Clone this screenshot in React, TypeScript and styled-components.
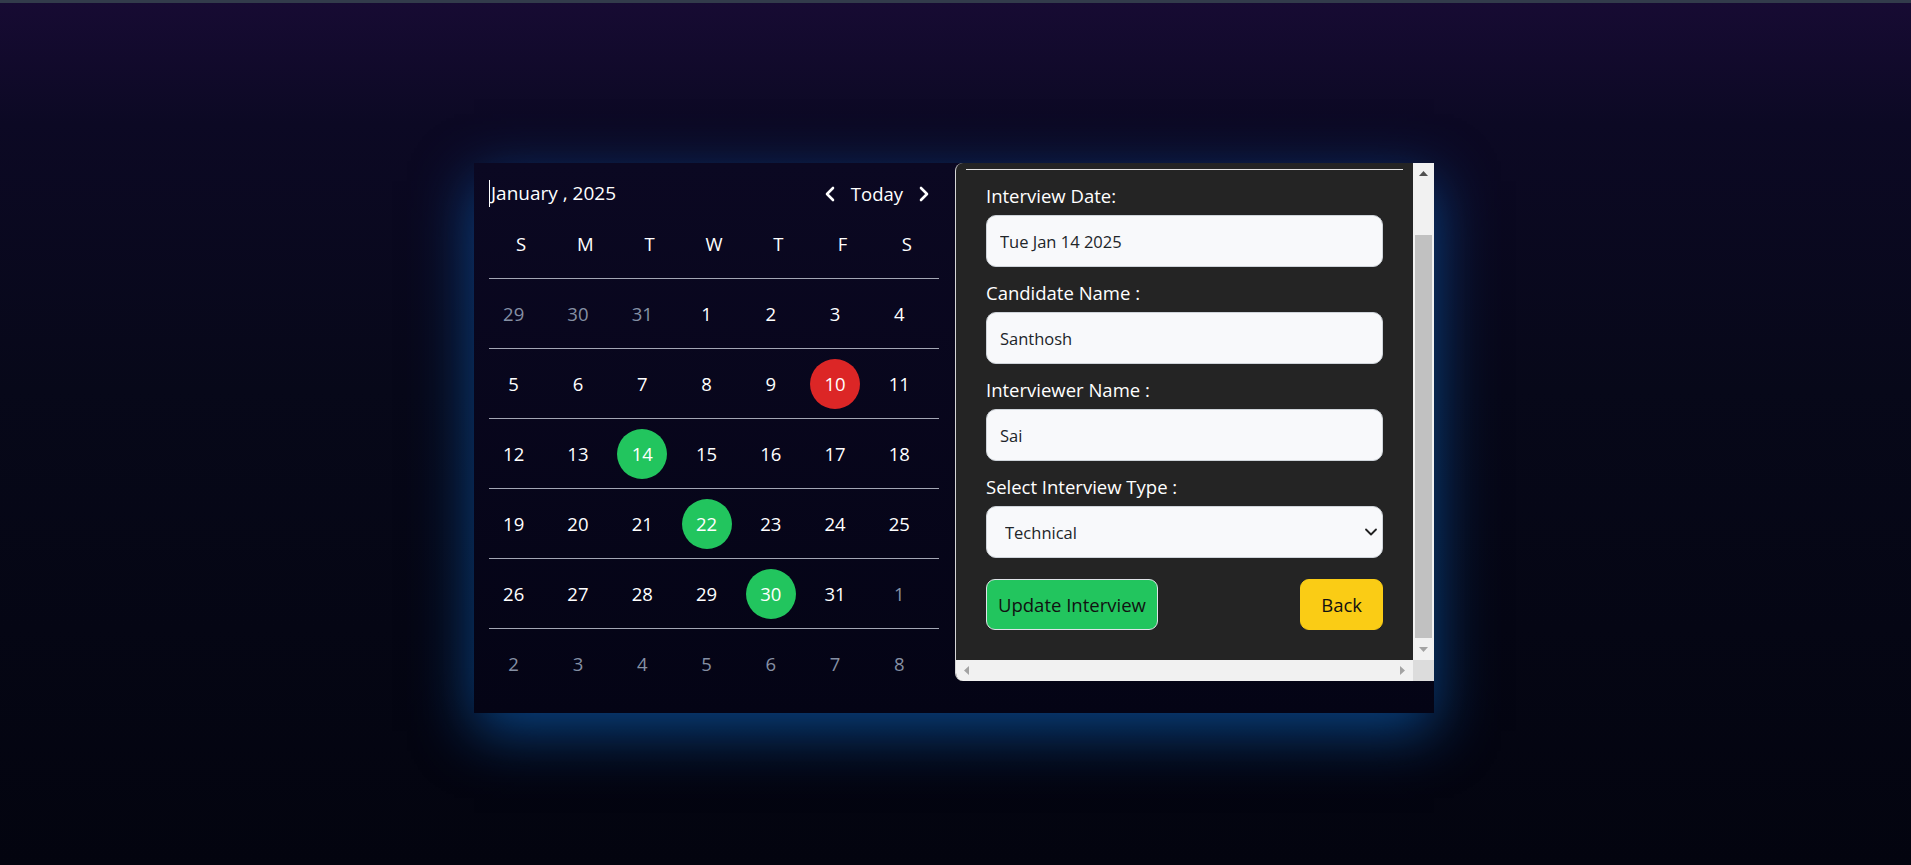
import React from "react";
import styled, { createGlobalStyle } from "styled-components";
import { ChevronLeft, ChevronRight, ChevronDown } from "lucide-react";

const GlobalStyle = createGlobalStyle`
  html, body { margin: 0; padding: 0; }
  body {
    font-family: "Open Sans", "Noto Sans", sans-serif;
    background: #03040f;
  }
  *, *::before, *::after { box-sizing: border-box; }
`;

const Page = styled.div`
  height: 865px;
  overflow: hidden;
  border-top: 3px solid #323b4b;
  background: linear-gradient(180deg, #170b33 0%, #0c0924 14%, #070819 45%, #03040f 100%);
  display: flex;
  justify-content: center;
  align-items: flex-start;
  padding: 160px 3px 0 0;
`;

const Card = styled.div`
  width: 960px;
  height: 550px;
  flex: none;
  display: flex;
  align-items: flex-start;
  background: linear-gradient(180deg, #0b0822 0%, #040415 100%);
  box-shadow: 0 18px 55px rgba(12, 108, 205, 0.6);
`;

/* ---------- Calendar ---------- */

const Calendar = styled.section`
  width: 481px;
  flex: none;
  padding: 15px 16px 15px 15px;
  color: #ffffff;
`;

const Toolbar = styled.div`
  height: 31px;
  display: flex;
  align-items: center;
  justify-content: space-between;
`;

const MonthTitle = styled.div`
  display: flex;
  align-items: center;
  font-size: 19px;
  line-height: 31px;
`;

const Caret = styled.span`
  width: 1px;
  height: 27px;
  background: #ffffff;
  margin-right: 1px;
`;

const Nav = styled.div`
  display: flex;
  align-items: center;
  gap: 9px;
  margin-right: 3px;
`;

const NavButton = styled.button`
  background: none;
  border: 0;
  padding: 0;
  color: #ffffff;
  display: flex;
  cursor: pointer;
`;

const TodayButton = styled.button`
  background: none;
  border: 0;
  padding: 0;
  color: #ffffff;
  font-family: inherit;
  font-size: 18.5px;
  line-height: 31px;
  cursor: pointer;
`;

const WeekRow = styled.div<{ $last?: boolean }>`
  display: grid;
  grid-template-columns: repeat(7, minmax(0, 1fr));
  align-items: center;
  justify-items: center;
  height: ${(p) => (p.$last ? 69 : 70)}px;
  border-bottom: ${(p) => (p.$last ? "none" : "1px solid #a3a6b4")};
`;

const WeekDay = styled.span`
  font-size: 18.5px;
  color: #ffffff;
`;

const DayCell = styled.div`
  width: 100%;
  display: flex;
  justify-content: center;
  padding-right: 15px;
`;

const Day = styled.span<{ $muted?: boolean; $mark?: "red" | "green" }>`
  flex: none;
  width: 50px;
  height: 50px;
  border-radius: 50%;
  display: flex;
  align-items: center;
  justify-content: center;
  font-size: 18.5px;
  color: ${(p) => (p.$muted ? "#8590a4" : "#ffffff")};
  background: ${(p) =>
    p.$mark === "red" ? "#dc2626" : p.$mark === "green" ? "#22c55e" : "transparent"};
`;

/* ---------- Form panel ---------- */

const Panel = styled.div`
  width: 479px;
  height: 518px;
  flex: none;
  display: grid;
  grid-template-columns: 1fr 21px;
  grid-template-rows: 1fr 21px;
  border-left: 1px solid #d6d6d6;
  border-radius: 8px 0 0 8px;
  overflow: hidden;
  background: #242424;
`;

const Viewport = styled.div`
  min-height: 0;
  overflow: hidden;
  display: flex;
  flex-direction: column;
  justify-content: flex-end;
  & > * {
    flex: none;
  }
`;

const HeaderRule = styled.hr`
  margin: 0 10px;
  height: 63px;
  border: 0;
  border-bottom: 1px solid #e2e2e2;
`;

const Form = styled.form`
  padding: 12px 30px 30px;
  display: flex;
  flex-direction: column;
  gap: 12px;
`;

const Field = styled.div`
  display: flex;
  flex-direction: column;
  gap: 6px;
`;

const Label = styled.label`
  color: #ffffff;
  font-size: 18.5px;
  line-height: 27px;
`;

const TextInput = styled.input`
  width: 100%;
  height: 52px;
  border: 1px solid #cfd4da;
  border-radius: 10px;
  background: #f8f9fb;
  padding: 0 13px;
  font-family: inherit;
  font-size: 16.5px;
  color: #212529;
  outline: none;
`;

const SelectWrap = styled.div`
  position: relative;
`;

const Select = styled.select`
  width: 100%;
  height: 52px;
  appearance: none;
  border: 1px solid #cfd4da;
  border-radius: 10px;
  background: #f8f9fb;
  padding: 0 18px;
  font-family: inherit;
  font-size: 16.5px;
  color: #212529;
  outline: none;
`;

const SelectIcon = styled(ChevronDown)`
  position: absolute;
  right: 2px;
  top: 50%;
  transform: translateY(-50%);
  pointer-events: none;
  color: #222222;
`;

const Actions = styled.div`
  margin-top: 9px;
  display: flex;
  justify-content: space-between;
  align-items: center;
`;

const ActionButton = styled.button<{ $variant: "success" | "warning" }>`
  height: 51px;
  padding: ${(p) => (p.$variant === "success" ? "0 11px" : "0 20px")};
  border-radius: 9px;
  font-family: inherit;
  font-size: 18.5px;
  color: #111111;
  cursor: pointer;
  background: ${(p) => (p.$variant === "success" ? "#22c55e" : "#facc15")};
  border: 1px solid ${(p) => (p.$variant === "success" ? "#dfe3e8" : "#facc15")};
`;

/* ---------- Scrollbars ---------- */

const VScroll = styled.div`
  min-height: 0;
  background: #f1f1f1;
  display: flex;
  flex-direction: column;
`;

const HScroll = styled.div`
  background: #f1f1f1;
  display: flex;
  align-items: center;
  justify-content: space-between;
`;

const ScrollButton = styled.div`
  width: 21px;
  height: 21px;
  flex: none;
  display: flex;
  align-items: center;
  justify-content: center;
`;

const VTrack = styled.div`
  flex: 1;
  display: flex;
  flex-direction: column;
  justify-content: flex-end;
  padding: 0 2px 1px;
`;

const Thumb = styled.div`
  width: 100%;
  background: #c1c1c1;
`;

const Corner = styled.div`
  background: #dcdcdc;
`;

type Dir = "up" | "down" | "left" | "right";

const ArrowSvg = styled.svg`
  display: block;
`;

const arrowPoints: Record<Dir, { w: number; h: number; pts: string }> = {
  up: { w: 9, h: 5, pts: "0,5 4.5,0 9,5" },
  down: { w: 9, h: 5, pts: "0,0 9,0 4.5,5" },
  left: { w: 5, h: 9, pts: "5,0 5,9 0,4.5" },
  right: { w: 5, h: 9, pts: "0,0 5,4.5 0,9" },
};

function Arrow({ dir, color }: { dir: Dir; color: string }) {
  const a = arrowPoints[dir];
  return (
    <ArrowSvg width={a.w} height={a.h} viewBox={`0 0 ${a.w} ${a.h}`}>
      <polygon points={a.pts} fill={color} />
    </ArrowSvg>
  );
}

/* ---------- Data ---------- */

type Cell = { n: number; muted?: boolean; mark?: "red" | "green" };

const marks: Record<number, "red" | "green"> = { 10: "red", 14: "green", 22: "green", 30: "green" };

function buildWeeks(): Cell[][] {
  const cells: Cell[] = [];
  [29, 30, 31].forEach((n) => cells.push({ n, muted: true }));
  for (let d = 1; d <= 31; d++) cells.push({ n: d, mark: marks[d] });
  let next = 1;
  while (cells.length < 42) cells.push({ n: next++, muted: true });
  const weeks: Cell[][] = [];
  for (let i = 0; i < 6; i++) weeks.push(cells.slice(i * 7, i * 7 + 7));
  return weeks;
}

const weekDays = ["S", "M", "T", "W", "T", "F", "S"];

const VIEW_H = 497;
const CONTENT_H = 561;
const TRACK_H = VIEW_H - 42;

export default function App() {
  const weeks = buildWeeks();
  const thumbH = Math.round((TRACK_H * VIEW_H) / CONTENT_H);

  return (
    <>
      <GlobalStyle />
      <Page>
        <Card>
          <Calendar>
            <Toolbar>
              <MonthTitle>
                <Caret />
                January , 2025
              </MonthTitle>
              <Nav>
                <NavButton aria-label="Previous month">
                  <ChevronLeft size={24} strokeWidth={2.6} />
                </NavButton>
                <TodayButton>Today</TodayButton>
                <NavButton aria-label="Next month">
                  <ChevronRight size={24} strokeWidth={2.6} />
                </NavButton>
              </Nav>
            </Toolbar>
            <WeekRow>
              {weekDays.map((d, i) => (
                <WeekDay key={i}>{d}</WeekDay>
              ))}
            </WeekRow>
            {weeks.map((week, wi) => (
              <WeekRow key={wi} $last={wi === weeks.length - 1}>
                {week.map((c, ci) => (
                  <DayCell key={ci}>
                    <Day $muted={c.muted} $mark={c.mark}>
                      {c.n}
                    </Day>
                  </DayCell>
                ))}
              </WeekRow>
            ))}
          </Calendar>

          <Panel>
            <Viewport>
              <HeaderRule />
              <Form onSubmit={(e) => e.preventDefault()}>
                <Field>
                  <Label>Interview Date:</Label>
                  <TextInput readOnly value="Tue Jan 14 2025" />
                </Field>
                <Field>
                  <Label>Candidate Name :</Label>
                  <TextInput readOnly value="Santhosh" />
                </Field>
                <Field>
                  <Label>Interviewer Name :</Label>
                  <TextInput readOnly value="Sai" />
                </Field>
                <Field>
                  <Label>Select Interview Type :</Label>
                  <SelectWrap>
                    <Select defaultValue="Technical">
                      <option>Technical</option>
                      <option>HR</option>
                      <option>Managerial</option>
                    </Select>
                    <SelectIcon size={20} strokeWidth={2.2} />
                  </SelectWrap>
                </Field>
                <Actions>
                  <ActionButton type="submit" $variant="success">
                    Update Interview
                  </ActionButton>
                  <ActionButton type="button" $variant="warning">
                    Back
                  </ActionButton>
                </Actions>
              </Form>
            </Viewport>
            <VScroll>
              <ScrollButton>
                <Arrow dir="up" color="#505050" />
              </ScrollButton>
              <VTrack>
                <Thumb style={{ height: thumbH }} />
              </VTrack>
              <ScrollButton>
                <Arrow dir="down" color="#a3a3a3" />
              </ScrollButton>
            </VScroll>
            <HScroll>
              <ScrollButton>
                <Arrow dir="left" color="#a3a3a3" />
              </ScrollButton>
              <ScrollButton>
                <Arrow dir="right" color="#a3a3a3" />
              </ScrollButton>
            </HScroll>
            <Corner />
          </Panel>
        </Card>
      </Page>
    </>
  );
}
